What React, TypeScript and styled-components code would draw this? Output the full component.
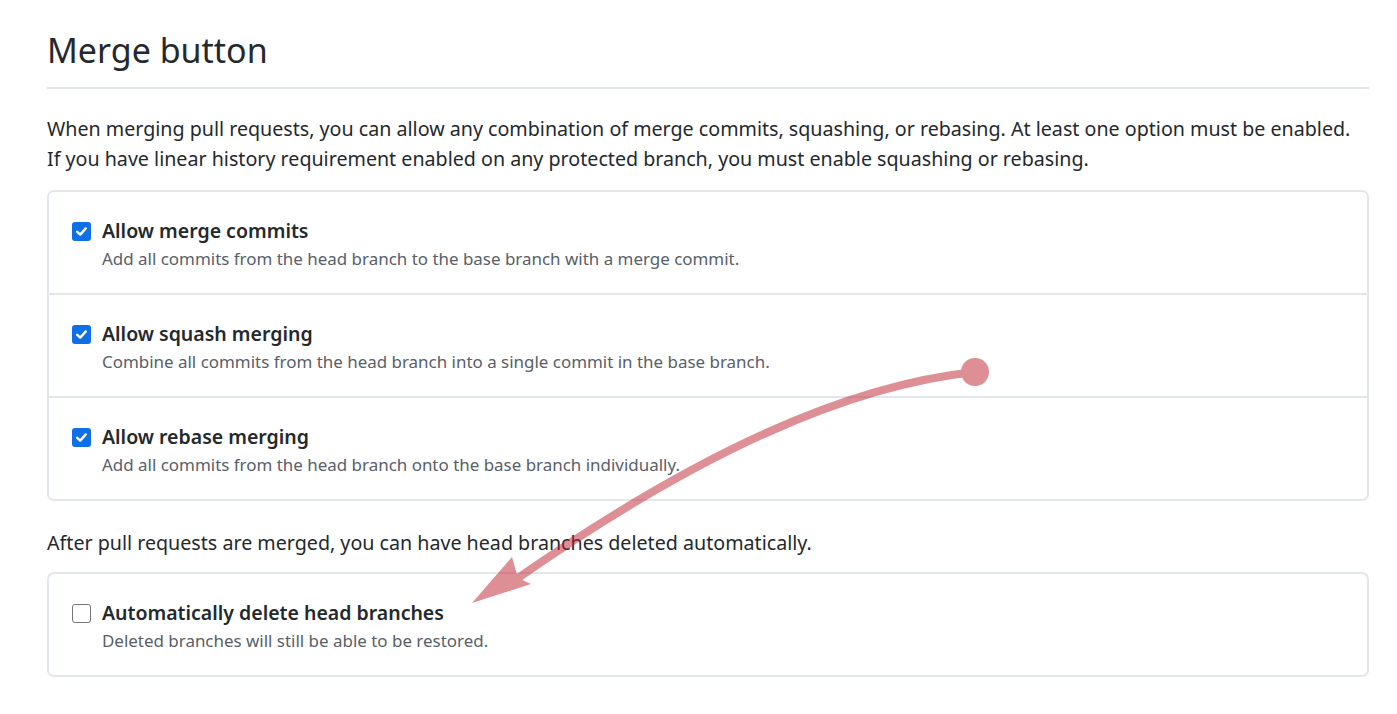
import React from "react";
import styled, { createGlobalStyle } from "styled-components";

const Global = createGlobalStyle`
  html, body { margin: 0; padding: 0; background: #ffffff; }
  body { font-family: "Noto Sans", "Open Sans", sans-serif; color: #24292e; }
`;

const Page = styled.div`
  position: relative;
  padding: 22px 28px 0 47px;
  width: 1397px;
  height: 714px;
  box-sizing: border-box;
  overflow: hidden;
`;

const Title = styled.h2`
  margin: 0;
  font-size: 34px;
  font-weight: 400;
  line-height: 56px;
  padding-bottom: 9px;
  border-bottom: 2px solid #e4e7ea;
`;

const Para = styled.p<{ $top: number }>`
  margin: ${(p) => p.$top}px 0 0 0;
  font-size: 19.66px;
  line-height: 30px;
  white-space: nowrap;
`;

const Card = styled.div<{ $top: number }>`
  margin-top: ${(p) => p.$top}px;
  border: 2px solid #e4e7ea;
  border-radius: 7px;
`;

const Row = styled.div`
  display: flex;
  align-items: flex-start;
  gap: 11px;
  padding: 24px 24px 21px 23px;
  & + & {
    border-top: 2px solid #e4e7ea;
  }
`;

const Box = styled.span<{ $checked: boolean }>`
  flex: none;
  width: 19px;
  height: 19px;
  margin-top: 6px;
  box-sizing: border-box;
  border-radius: 3px;
  display: flex;
  align-items: center;
  justify-content: center;
  background: ${(p) => (p.$checked ? "#0f6fe6" : "#ffffff")};
  border: ${(p) => (p.$checked ? "none" : "1.5px solid #767676")};
`;

const Texts = styled.div`
  display: flex;
  flex-direction: column;
`;

const Label = styled.span`
  font-size: 19.5px;
  font-weight: 600;
  line-height: 30px;
  color: #24292e;
`;

const Desc = styled.span`
  font-size: 16.95px;
  line-height: 26px;
  color: #586069;
`;

const Overlay = styled.svg`
  position: absolute;
  left: 0;
  top: 0;
  pointer-events: none;
`;

function Check({ checked }: { checked: boolean }) {
  return (
    <Box $checked={checked}>
      {checked && (
        <svg width="13" height="13" viewBox="0 0 13 13">
          <path d="M2.2 6.8 L5.2 9.6 L10.8 3.4" fill="none" stroke="#fff" strokeWidth="2.4" strokeLinecap="round" strokeLinejoin="round" />
        </svg>
      )}
    </Box>
  );
}

const merges = [
  { label: "Allow merge commits", desc: "Add all commits from the head branch to the base branch with a merge commit." },
  { label: "Allow squash merging", desc: "Combine all commits from the head branch into a single commit in the base branch." },
  { label: "Allow rebase merging", desc: "Add all commits from the head branch onto the base branch individually." },
];

export default function App() {
  return (
    <Page>
      <Global />
      <Title>Merge button</Title>
      <Para $top={25}>
        When merging pull requests, you can allow any combination of merge commits, squashing, or rebasing. At least one option must be enabled.
        <br />
        If you have linear history requirement enabled on any protected branch, you must enable squashing or rebasing.
      </Para>
      <Card $top={16}>
        {merges.map((m) => (
          <Row key={m.label}>
            <Check checked />
            <Texts>
              <Label>{m.label}</Label>
              <Desc>{m.desc}</Desc>
            </Texts>
          </Row>
        ))}
      </Card>
      <Para $top={27}>After pull requests are merged, you can have head branches deleted automatically.</Para>
      <Card $top={14}>
        <Row>
          <Check checked={false} />
          <Texts>
            <Label>Automatically delete head branches</Label>
            <Desc>Deleted branches will still be able to be restored.</Desc>
          </Texts>
        </Row>
      </Card>
      <Overlay width="1397" height="714" viewBox="0 0 1397 714">
        <g opacity="0.5">
          <path d="M975 372 C 850 385 700 450 508 585" fill="none" stroke="#bf1f2d" strokeWidth="8" />
          <circle cx="975" cy="372" r="14" fill="#bf1f2d" />
          <polygon points="472,603 512,557 518,578 531,584" fill="#bf1f2d" />
        </g>
      </Overlay>
    </Page>
  );
}
